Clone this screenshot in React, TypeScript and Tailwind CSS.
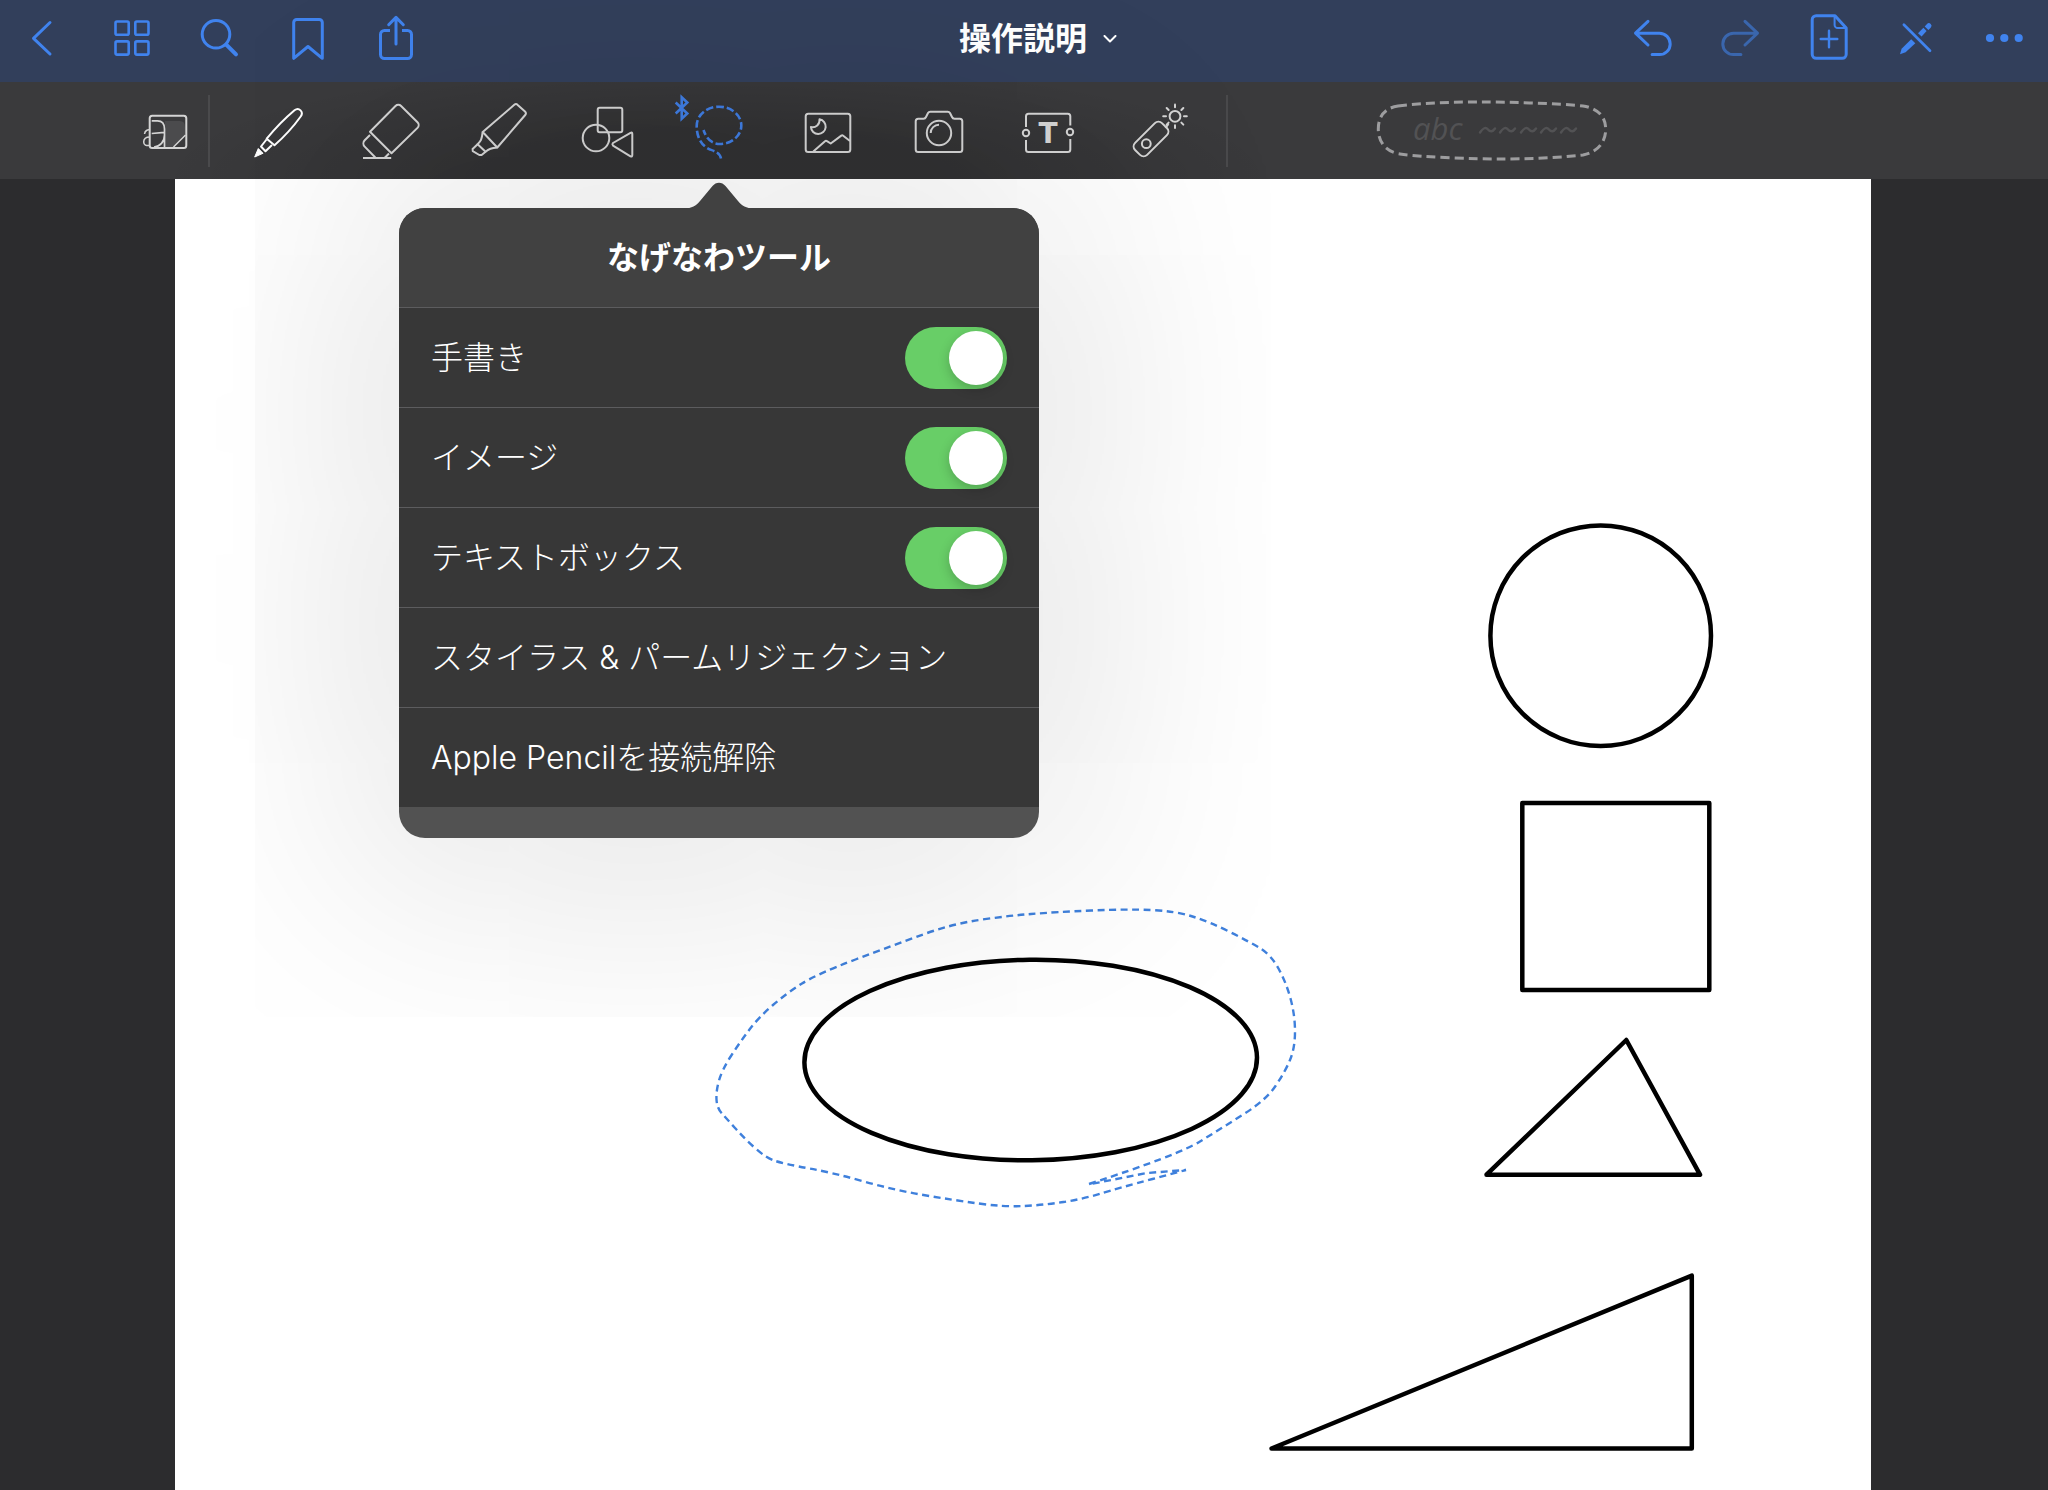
import React, { useState } from "react";

type IconProps = { children: React.ReactNode; className?: string };

function BarIcon({ children, className = "text-[#4083ee]" }: IconProps) {
  return (
    <svg
      viewBox="0 0 88 82"
      width="88"
      height="82"
      fill="none"
      stroke="currentColor"
      strokeWidth="3"
      strokeLinecap="round"
      strokeLinejoin="round"
      className={className}
      aria-hidden="true"
    >
      {children}
    </svg>
  );
}

function ToolIcon({ children, className = "text-[#d4d4d4]" }: IconProps) {
  return (
    <svg
      viewBox="0 0 72 97"
      width="72"
      height="97"
      fill="none"
      stroke="currentColor"
      strokeWidth="2"
      strokeLinejoin="round"
      className={`overflow-visible ${className}`}
      aria-hidden="true"
    >
      {children}
    </svg>
  );
}

const leftActions = [
  { label: "戻る", icon: <BarIcon><path d="M50 22.5 33.5 38.3 50 54" /></BarIcon> },
  {
    label: "サムネイル",
    icon: (
      <BarIcon>
        <g strokeWidth="2.6">
          <rect x="27.5" y="21.5" width="13.2" height="13.2" rx="1.5" />
          <rect x="47.3" y="21.5" width="13.2" height="13.2" rx="1.5" />
          <rect x="27.5" y="41.4" width="13.2" height="13.2" rx="1.5" />
          <rect x="47.3" y="41.4" width="13.2" height="13.2" rx="1.5" />
        </g>
      </BarIcon>
    ),
  },
  {
    label: "検索",
    icon: (
      <BarIcon>
        <circle cx="40" cy="34.3" r="13.8" />
        <path d="M50.5 44.8 60 54.3" strokeWidth="4" />
      </BarIcon>
    ),
  },
  {
    label: "ブックマーク",
    icon: (
      <BarIcon>
        <path d="M29.7 58.3V22.5a3 3 0 0 1 3-3h22.6a3 3 0 0 1 3 3v35.8L44 46.5z" />
      </BarIcon>
    ),
  },
  {
    label: "共有",
    icon: (
      <BarIcon>
        <path d="M38 30.5h-5.500a4 4 0 0 0-4 4v20a4 4 0 0 0 4 4h23a4 4 0 0 0 4-4v-20a4 4 0 0 0-4-4H50" strokeLinecap="butt" />
        <path d="M44 44V18M36.7 24.7 44 17.4l7.3 7.3" />
      </BarIcon>
    ),
  },
];

const rightActions = [
  {
    label: "取り消す",
    icon: (
      <BarIcon>
        <path d="M40 21.3 27.5 33.2 40 45M28 33.2h23.5a10.7 10.7 0 0 1 0 21.4h-7.4" />
      </BarIcon>
    ),
  },
  {
    label: "やり直す",
    icon: (
      <BarIcon className="text-[#3a66ad]">
        <path d="M49 21.3 61.5 33.2 49 45M61 33.2H37.5a10.7 10.7 0 0 0 0 21.4h7.4" />
      </BarIcon>
    ),
  },
  {
    label: "ページを追加",
    icon: (
      <BarIcon>
        <path d="M51 15.7H32.2a4 4 0 0 0-4 4v34.6a4 4 0 0 0 4 4h26a4 4 0 0 0 4-4V28z" />
        <path d="M50.6 16v9a3 3 0 0 0 3 3h8" strokeWidth="2" />
        <path d="M45 30.7v16.6M36.7 39h16.6" strokeWidth="2.4" />
      </BarIcon>
    ),
  },
  {
    label: "閲覧モード",
    icon: (
      <BarIcon>
        <path d="M31.9 24.7 58 50.8" strokeWidth="2.7" />
        <g fill="currentColor" stroke="none">
          <path d="M28 54.3 29.6 48.8 39.2 39.2 43.3 43.3 33.6 52.2Z" />
          <path d="M46 33.2 51.4 27.8 54.6 31 49.6 36.4Z" />
          <path d="M52.7 26.4 55 24a2.6 2.6 0 0 1 3.7 3.7l-2.3 2.4Z" />
        </g>
      </BarIcon>
    ),
  },
  {
    label: "その他",
    icon: (
      <BarIcon>
        <g fill="currentColor" stroke="none">
          <circle cx="30" cy="38" r="4.1" />
          <circle cx="44.3" cy="38" r="4.1" />
          <circle cx="58.7" cy="38" r="4.1" />
        </g>
      </BarIcon>
    ),
  },
];

const sunRays = [0, 45, 90, 135, 180, 225, 270, 315];

const tools = [
  {
    id: "pen",
    label: "ペン",
    icon: (
      <ToolIcon className="text-white">
        <path d="M23.7 56.7Q37 40.500 51.500 28.300c4.500-3.400 9.500 1.500 6.200 6.200Q46.500 50 31.500 63.300Z" />
        <path d="M23.500 57.500 18 64.500 22.500 69.300 29 63" />
        <path d="M11.700 75 15.300 66.500 20 71.300Z" fill="currentColor" strokeWidth="1" />
      </ToolIcon>
    ),
  },
  {
    id: "eraser",
    label: "消しゴム",
    icon: (
      <ToolIcon>
        <path d="M17 49.700 42.500 24a4 4 0 0 1 5.600 0L64.500 40.300a4 4 0 0 1 0 5.600L38.500 71.300Z" />
        <path d="M17 53 11.700 58.300a4.500 4.500 0 0 0 0 6.300L22.300 75.500M36 71.500 31.500 76M10 76h28.200" />
      </ToolIcon>
    ),
  },
  {
    id: "highlighter",
    label: "蛍光ペン",
    icon: (
      <ToolIcon>
        <path d="M19.700 50 51.300 22.800a2.500 2.500 0 0 1 3.400.1L62 29.600a2.500 2.500 0 0 1 .2 3.400L34.300 65.500Z" />
        <path d="M19.700 50C18.800 57 18 59 14.600 62.200L22.600 69.700C26 66.500 28.500 66 34.300 65.500" />
        <path d="M14.600 62.200 9.600 67 9.800 69.200 16.300 73 18.600 73 22.600 69.700" />
      </ToolIcon>
    ),
  },
  {
    id: "shape",
    label: "シェイプ",
    icon: (
      <ToolIcon>
        <rect x="24.700" y="25.700" width="24.600" height="24.600" rx="2" />
        <circle cx="23" cy="56" r="13.300" />
        <path d="M40 61Q38.800 62.300 40 63.600L57.500 74.400Q59.300 75 59.300 73V52Q59.300 50 57.500 50.800Z" />
      </ToolIcon>
    ),
  },
  {
    id: "lasso",
    label: "なげなわツール",
    icon: (
      <ToolIcon className="text-[#3f7ce0]">
        <path
          d="M38 76.500C37 71 32.500 69.500 27 67.500C19 64 13.700 56 13.700 44C13.700 33 23.700 24.700 36 24.700S58.300 33 58.300 43.500S48.500 62 37 62C29 62 23.500 57 20.500 48"
          strokeWidth="2.600"
          strokeDasharray="7.500 3"
        />
        <path d="M-7.300 20.500 4.300 31.500-1.300 36.800V15.200L4.300 20.500-7.300 31.500" strokeWidth="2.600" strokeLinejoin="miter" />
      </ToolIcon>
    ),
  },
  {
    id: "image",
    label: "イメージ",
    icon: (
      <ToolIcon>
        <rect x="12.700" y="31.700" width="44.600" height="38.300" rx="2.500" />
        <path d="M26.500 37.300a7 7 0 0 1-8.600 7.700a7.400 7.400 0 1 0 8.600-7.700Z" />
        <path d="M20.300 69.500 32 59.200Q33 58.400 34 59.200L37.700 61.500 48.300 53.600Q49.300 53 50.200 53.700L57 59" />
      </ToolIcon>
    ),
  },
  {
    id: "camera",
    label: "カメラ",
    icon: (
      <ToolIcon>
        <path d="M15.200 36.700H20.500Q22.300 36.700 23 35L25 31Q25.700 29.700 27.300 29.700H44.700Q46.300 29.700 47 31L49 35Q49.700 36.700 51.500 36.700H56.800A2.500 2.500 0 0 1 59.300 39.200V67.500A2.500 2.500 0 0 1 56.800 70H15.200A2.500 2.500 0 0 1 12.700 67.500V39.200A2.500 2.500 0 0 1 15.200 36.700Z" />
        <circle cx="36" cy="51" r="12.200" />
        <path d="M27.700 51A8.300 8.300 0 0 1 36 42.700" />
      </ToolIcon>
    ),
  },
  {
    id: "text",
    label: "テキスト",
    icon: (
      <ToolIcon>
        <path d="M13 45V34.200a2.500 2.500 0 0 1 2.500-2.500h39.300a2.500 2.500 0 0 1 2.500 2.500V43.500M57.300 57V67.500a2.500 2.500 0 0 1-2.500 2.500H15.500a2.500 2.500 0 0 1-2.500-2.500V58" />
        <circle cx="13" cy="51" r="3.200" />
        <circle cx="57" cy="50" r="3.200" />
        <text
          x="35"
          y="61"
          textAnchor="middle"
          fill="currentColor"
          stroke="none"
          className="font-['DejaVu_Sans'] text-[28px] font-bold"
        >
          T
        </text>
      </ToolIcon>
    ),
  },
  {
    id: "laser",
    label: "レーザーポインタ",
    icon: (
      <ToolIcon>
        <rect x="9" y="48.500" width="38" height="17" rx="5" transform="rotate(-45 28 57)" />
        <circle cx="23.300" cy="61.700" r="4.400" />
        <path d="M42.500 46 45.500 42" />
        <circle cx="52" cy="34.300" r="5.400" />
        {sunRays.map((angle) => (
          <path key={angle} d="M52 25.300V22.500" strokeLinecap="round" transform={`rotate(${angle} 52 34.3)`} />
        ))}
      </ToolIcon>
    ),
  },
];

const lassoPoints: [number, number][] = [
  [1089, 1184], [1178, 1155], [1222, 1128], [1266, 1100], [1285, 1072], [1295, 1048], [1295, 1015],
  [1286, 982], [1271, 955], [1250, 942], [1210, 922], [1175, 911], [1127, 909], [1056, 912],
  [1006, 916], [952, 924], [894, 945], [817, 974], [787, 993], [759, 1017], [740, 1042],
  [722, 1070], [716, 1091], [717, 1108], [726, 1118], [744, 1138], [766, 1158], [785, 1164],
  [834, 1173], [894, 1190], [953, 1200], [1004, 1207], [1044, 1205], [1083, 1199], [1119, 1188],
  [1186, 1170],
];

function smoothPath(points: [number, number][]) {
  const parts = [`M${points[0][0]} ${points[0][1]}`];
  for (let i = 1; i < points.length - 1; i++) {
    const [x, y] = points[i];
    const [nx, ny] = points[i + 1];
    parts.push(`Q${x} ${y} ${(x + nx) / 2} ${(y + ny) / 2}`);
  }
  const last = points[points.length - 1];
  parts.push(`L${last[0]} ${last[1]}`);
  return parts.join(" ");
}

function Drawing() {
  return (
    <svg viewBox="175 179 1696 1311" className="block w-full" fill="none" role="img" aria-label="ノートの図形">
      <g stroke="#000" strokeWidth="4.500" strokeLinejoin="round">
        <ellipse cx="1030.700" cy="1060" rx="226.300" ry="100.300" transform="rotate(-0.7 1030.700 1060)" />
        <circle cx="1600.700" cy="635.700" r="110.300" />
        <rect x="1522.300" y="803" width="187" height="187" />
        <path d="M1486.500 1174.700 1626.300 1040 1700 1174.700Z" />
        <path d="M1271.500 1448.500 1691.800 1275.700V1448.500Z" />
      </g>
      <path
        d={`${smoothPath(lassoPoints)} L1147 1173 L1091 1184`}
        stroke="#3f80dc"
        strokeWidth="2.400"
        strokeDasharray="7 4.500"
      />
    </svg>
  );
}

const toggleRows = ["手書き", "イメージ", "テキストボックス"];
const linkRows = ["スタイラス & パームリジェクション", "Apple Pencilを接続解除"];

function LassoPopover() {
  const [enabled, setEnabled] = useState<Record<string, boolean>>({
    手書き: true,
    イメージ: true,
    テキストボックス: true,
  });
  return (
    <div
      role="dialog"
      aria-labelledby="lasso-title"
      className="absolute top-full left-1/2 z-10 mt-[29px] w-[640px] -translate-x-1/2 rounded-[26px] shadow-[0_0_280px_30px_rgba(0,0,0,0.15)]"
    >
      <svg
        viewBox="0 0 70 27"
        width="70"
        height="27"
        className="absolute bottom-full left-1/2 -mb-px -translate-x-1/2 text-[#414141]"
        fill="currentColor"
        aria-hidden="true"
      >
        <path d="M0 27C8 26 12 24 16 19L28.500 4C32 -.5 38 -.5 41.500 4L54 19C58 24 62 26 70 27Z" />
      </svg>
      <div className="overflow-hidden rounded-[26px] bg-[#525252] pb-[31px]">
        <h2 id="lasso-title" className="flex h-[99px] items-center justify-center bg-[#414141] text-[32px] font-bold">
          なげなわツール
        </h2>
        <div className="bg-[#373737] text-[32px] font-light">
          {toggleRows.map((name) => (
            <label key={name} className="flex h-[100px] items-center justify-between border-t border-[#5c5c5e] px-8">
              {name}
              <input
                type="checkbox"
                role="switch"
                checked={enabled[name]}
                onChange={(e) => setEnabled({ ...enabled, [name]: e.target.checked })}
                className="flex h-[62px] w-[102px] appearance-none items-center rounded-full bg-[#636366] px-1 before:size-[54px] before:rounded-full before:bg-white before:shadow-[0_4px_12px_rgba(0,0,0,0.2)] before:content-[''] checked:justify-end checked:bg-[#68ce67]"
              />
            </label>
          ))}
          {linkRows.map((name) => (
            <button
              key={name}
              type="button"
              className="flex h-[100px] w-full items-center border-t border-[#5c5c5e] px-8 text-left"
            >
              {name}
            </button>
          ))}
        </div>
      </div>
    </div>
  );
}

export default function App() {
  return (
    <div
      lang="ja"
      className="flex min-h-screen flex-col overflow-hidden bg-[#2c2c2e] font-['Inter','Noto_Sans_CJK_JP',sans-serif] text-white"
    >
      <header className="flex h-[82px] items-center justify-between bg-[#323f5b]">
        <nav className="flex" aria-label="ナビゲーション">
          {leftActions.map((a) => (
            <button key={a.label} type="button" aria-label={a.label}>
              {a.icon}
            </button>
          ))}
        </nav>
        <button type="button" className="flex items-center gap-4 pb-1 pl-7 text-[32px] font-bold">
          操作説明
          <svg viewBox="0 0 14 8" width="14" height="8" fill="none" stroke="currentColor" strokeWidth="2" aria-hidden="true">
            <path d="M1.500 1 7 6.500 12.500 1" strokeLinecap="round" strokeLinejoin="round" />
          </svg>
        </button>
        <nav className="flex" aria-label="編集">
          {rightActions.map((a) => (
            <button key={a.label} type="button" aria-label={a.label}>
              {a.icon}
            </button>
          ))}
        </nav>
      </header>

      <div
        role="toolbar"
        aria-label="ツール"
        className="flex h-[97px] items-center bg-[#3a3a3c] bg-[radial-gradient(ellipse_560px_120px_at_718px_100%,rgba(0,0,0,0.16)_40%,transparent)]"
      >
        <div className="flex w-[210px] items-center justify-end">
          <button type="button" aria-label="拡大ウインドウ" className="mr-5">
            <svg viewBox="0 0 46 97" width="46" height="97" fill="none" stroke="#d4d4d4" strokeWidth="2" aria-hidden="true">
              <path d="M23 39H38Q43 39 43 45V52L31 65H23Z" fill="#4b4b4d" stroke="none" />
              <rect x="7.700" y="33.700" width="36.600" height="32.300" rx="2.500" />
              <path d="M9.700 38.800H15.500Q22.500 38.800 22.500 47V65.500M9.700 51.500 22.500 50.300M22.500 53C22.500 60 18 64.500 12 65" strokeWidth="1.700" />
              <path d="M2.500 52C3 48.500 5.500 47.500 8 48M8 55C4 55 1.700 57 1.700 60S4 64 8 63.500M31.500 65 43.500 53" strokeWidth="1.500" />
            </svg>
          </button>
          <span className="h-[72px] w-0.5 bg-[#4a4a4c]" />
        </div>
        <div className="ml-3.5 flex">
          {tools.map((t) => (
            <div key={t.id} className="relative">
              <button type="button" aria-label={t.label} aria-pressed={t.id === "lasso"} className="flex w-[110px] justify-center">
                {t.icon}
              </button>
              {t.id === "lasso" && <LassoPopover />}
            </div>
          ))}
        </div>
        <span className="ml-3 h-[72px] w-0.5 bg-[#4a4a4c]" />
        <button type="button" aria-label="なげなわの選択範囲" className="ml-[148px]">
          <svg viewBox="0 0 232 97" width="232" height="97" fill="none" aria-hidden="true">
            <path
              d="M22 24C50 20.500 80 20 107 20S185 21.500 207 24C221 26 229.700 34 229.700 47S222 70 207 73C180 76 150 77 124 77S50 75.500 24 72C10 70 2.300 60 2.300 47S9 26 22 24Z"
              stroke="#9d9d9f"
              strokeWidth="3"
              strokeDasharray="9 5"
            />
            <text x="37" y="58" fill="#525254" className="font-['Open_Sans'] text-[31px] italic">
              abc
            </text>
            {[104, 124, 145, 165, 185].map((x) => (
              <path
                key={x}
                d={`M${x} 50.500q4.500-7 8-3t7-1`}
                stroke="#525254"
                strokeWidth="2.400"
                strokeLinecap="round"
              />
            ))}
          </svg>
        </button>
      </div>

      <main className="mr-[177px] ml-[175px] flex-1 bg-white">
        <Drawing />
      </main>
    </div>
  );
}
